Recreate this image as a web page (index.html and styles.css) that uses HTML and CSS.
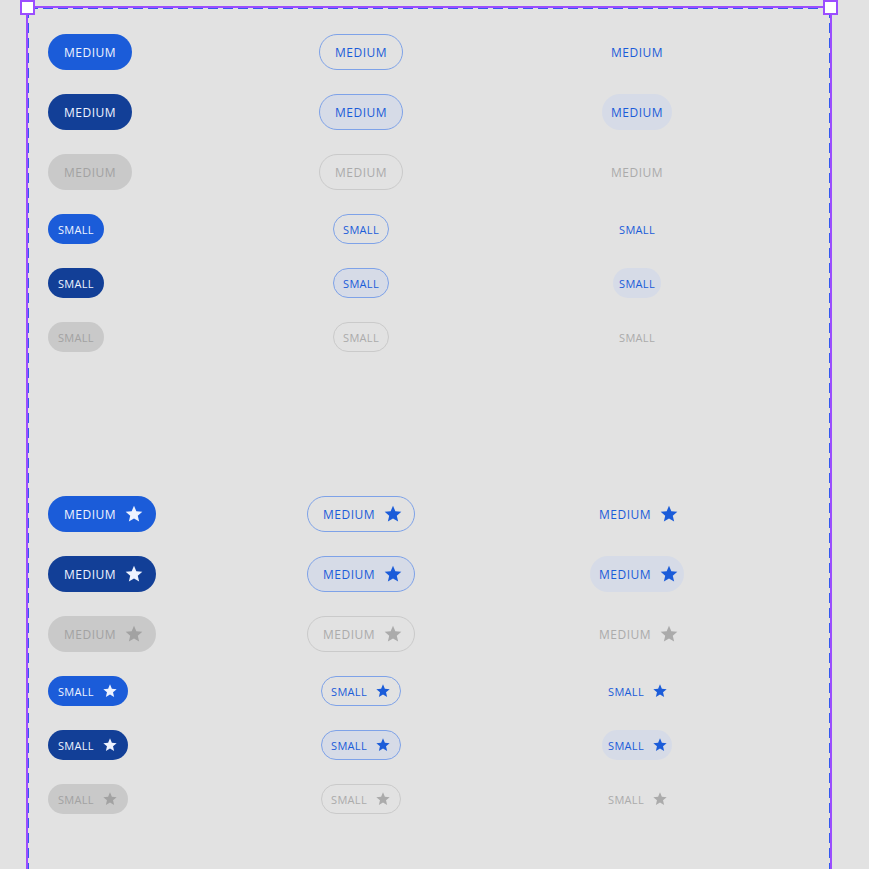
FILE: index.html
```html
<!DOCTYPE html>
<html lang="en">
<head>
  <meta charset="UTF-8">
  <meta name="viewport" content="width=device-width, initial-scale=1.0">
  <title>Buttons</title>
  <link rel="stylesheet" href="styles.css">
</head>
<body>
  <div class="canvas">
    <!-- selection frame drawn over the story -->
    <div class="frame">
      <span class="dash dash-top"></span>
      <span class="dash dash-left"></span>
      <span class="dash dash-right"></span>
      <span class="handle handle-left"></span>
      <span class="handle handle-right"></span>
    </div>

    <section class="button-grid">
      <button class="btn medium filled">Medium</button>
      <button class="btn medium outline">Medium</button>
      <button class="btn medium text">Medium</button>

      <button class="btn medium filled pressed">Medium</button>
      <button class="btn medium outline pressed">Medium</button>
      <button class="btn medium text pressed">Medium</button>

      <button class="btn medium filled disabled">Medium</button>
      <button class="btn medium outline disabled">Medium</button>
      <button class="btn medium text disabled">Medium</button>

      <button class="btn small filled">Small</button>
      <button class="btn small outline">Small</button>
      <button class="btn small text">Small</button>

      <button class="btn small filled pressed">Small</button>
      <button class="btn small outline pressed">Small</button>
      <button class="btn small text pressed">Small</button>

      <button class="btn small filled disabled">Small</button>
      <button class="btn small outline disabled">Small</button>
      <button class="btn small text disabled">Small</button>
    </section>

    <section class="button-grid icons">
      <button class="btn medium filled">Medium <svg class="star" viewBox="0 0 24 24"><path d="M12 17.27L18.18 21l-1.64-7.03L22 9.24l-7.19-.61L12 2 9.19 8.63 2 9.24l5.46 4.73L5.82 21z"/></svg></button>
      <button class="btn medium outline">Medium <svg class="star" viewBox="0 0 24 24"><path d="M12 17.27L18.18 21l-1.64-7.03L22 9.24l-7.19-.61L12 2 9.19 8.63 2 9.24l5.46 4.73L5.82 21z"/></svg></button>
      <button class="btn medium text">Medium <svg class="star" viewBox="0 0 24 24"><path d="M12 17.27L18.18 21l-1.64-7.03L22 9.24l-7.19-.61L12 2 9.19 8.63 2 9.24l5.46 4.73L5.82 21z"/></svg></button>

      <button class="btn medium filled pressed">Medium <svg class="star" viewBox="0 0 24 24"><path d="M12 17.27L18.18 21l-1.64-7.03L22 9.24l-7.19-.61L12 2 9.19 8.63 2 9.24l5.46 4.73L5.82 21z"/></svg></button>
      <button class="btn medium outline pressed">Medium <svg class="star" viewBox="0 0 24 24"><path d="M12 17.27L18.18 21l-1.64-7.03L22 9.24l-7.19-.61L12 2 9.19 8.63 2 9.24l5.46 4.73L5.82 21z"/></svg></button>
      <button class="btn medium text pressed">Medium <svg class="star" viewBox="0 0 24 24"><path d="M12 17.27L18.18 21l-1.64-7.03L22 9.24l-7.19-.61L12 2 9.19 8.63 2 9.24l5.46 4.73L5.82 21z"/></svg></button>

      <button class="btn medium filled disabled">Medium <svg class="star" viewBox="0 0 24 24"><path d="M12 17.27L18.18 21l-1.64-7.03L22 9.24l-7.19-.61L12 2 9.19 8.63 2 9.24l5.46 4.73L5.82 21z"/></svg></button>
      <button class="btn medium outline disabled">Medium <svg class="star" viewBox="0 0 24 24"><path d="M12 17.27L18.18 21l-1.64-7.03L22 9.24l-7.19-.61L12 2 9.19 8.63 2 9.24l5.46 4.73L5.82 21z"/></svg></button>
      <button class="btn medium text disabled">Medium <svg class="star" viewBox="0 0 24 24"><path d="M12 17.27L18.18 21l-1.64-7.03L22 9.24l-7.19-.61L12 2 9.19 8.63 2 9.24l5.46 4.73L5.82 21z"/></svg></button>

      <button class="btn small filled">Small <svg class="star" viewBox="0 0 24 24"><path d="M12 17.27L18.18 21l-1.64-7.03L22 9.24l-7.19-.61L12 2 9.19 8.63 2 9.24l5.46 4.73L5.82 21z"/></svg></button>
      <button class="btn small outline">Small <svg class="star" viewBox="0 0 24 24"><path d="M12 17.27L18.18 21l-1.64-7.03L22 9.24l-7.19-.61L12 2 9.19 8.63 2 9.24l5.46 4.73L5.82 21z"/></svg></button>
      <button class="btn small text">Small <svg class="star" viewBox="0 0 24 24"><path d="M12 17.27L18.18 21l-1.64-7.03L22 9.24l-7.19-.61L12 2 9.19 8.63 2 9.24l5.46 4.73L5.82 21z"/></svg></button>

      <button class="btn small filled pressed">Small <svg class="star" viewBox="0 0 24 24"><path d="M12 17.27L18.18 21l-1.64-7.03L22 9.24l-7.19-.61L12 2 9.19 8.63 2 9.24l5.46 4.73L5.82 21z"/></svg></button>
      <button class="btn small outline pressed">Small <svg class="star" viewBox="0 0 24 24"><path d="M12 17.27L18.18 21l-1.64-7.03L22 9.24l-7.19-.61L12 2 9.19 8.63 2 9.24l5.46 4.73L5.82 21z"/></svg></button>
      <button class="btn small text pressed">Small <svg class="star" viewBox="0 0 24 24"><path d="M12 17.27L18.18 21l-1.64-7.03L22 9.24l-7.19-.61L12 2 9.19 8.63 2 9.24l5.46 4.73L5.82 21z"/></svg></button>

      <button class="btn small filled disabled">Small <svg class="star" viewBox="0 0 24 24"><path d="M12 17.27L18.18 21l-1.64-7.03L22 9.24l-7.19-.61L12 2 9.19 8.63 2 9.24l5.46 4.73L5.82 21z"/></svg></button>
      <button class="btn small outline disabled">Small <svg class="star" viewBox="0 0 24 24"><path d="M12 17.27L18.18 21l-1.64-7.03L22 9.24l-7.19-.61L12 2 9.19 8.63 2 9.24l5.46 4.73L5.82 21z"/></svg></button>
      <button class="btn small text disabled">Small <svg class="star" viewBox="0 0 24 24"><path d="M12 17.27L18.18 21l-1.64-7.03L22 9.24l-7.19-.61L12 2 9.19 8.63 2 9.24l5.46 4.73L5.82 21z"/></svg></button>
    </section>
  </div>
</body>
</html>
```

FILE: styles.css
```css
/* Button story canvas */
body {
  margin: 0;
  background: #e2e2e2;
  font-family: 'Open Sans', 'Noto Sans', sans-serif;
  overflow: hidden;
}

.canvas {
  position: relative;
  min-height: 869px;
  padding: 34px 0 0 48px;
  box-sizing: border-box;
}

/* selection overlay */
.frame {
  position: absolute;
  left: 26px;
  top: 6px;
  width: 806px;
  height: 900px;
  border: 2px solid #9b4dff;
  border-bottom: none;
  box-sizing: border-box;
  pointer-events: none;
}

.dash {
  position: absolute;
}

.dash-top {
  top: 0;
  left: 0;
  right: 0;
  height: 1px;
  background: repeating-linear-gradient(to right, #3458f0 0 10px, transparent 10px 15px);
}

.dash-left,
.dash-right {
  top: 0;
  bottom: 0;
  width: 1px;
  background: repeating-linear-gradient(to bottom, #3458f0 0 10px, transparent 10px 15px);
}

.dash-left {
  left: 0;
}

.dash-right {
  right: 0;
}

.handle {
  position: absolute;
  top: -8px;
  width: 11px;
  height: 11px;
  background: #fff;
  border: 2px solid #9b4dff;
}

.handle-left {
  left: -8px;
}

.handle-right {
  right: -8px;
}

/* grid of variants */
.button-grid {
  display: grid;
  grid-template-columns: 175px 276px 276px;
  row-gap: 24px;
  align-items: center;
}

.button-grid .btn:nth-child(3n+1) {
  justify-self: start;
}

.button-grid .btn:nth-child(3n+2),
.button-grid .btn:nth-child(3n) {
  justify-self: center;
}

.icons {
  margin-top: 144px;
}

/* button base */
.btn {
  display: inline-flex;
  align-items: center;
  box-sizing: border-box;
  border: 1px solid transparent;
  border-radius: 999px;
  background: transparent;
  font-family: inherit;
  font-weight: 500;
  text-transform: uppercase;
  cursor: pointer;
  white-space: nowrap;
}

.btn .star {
  fill: currentColor;
  flex: none;
}

.medium {
  height: 36px;
  padding: 0 15px;
  font-size: 12px;
  letter-spacing: 0.5px;
}

.medium .star {
  width: 20px;
  height: 20px;
  margin-left: 8px;
  margin-right: -4px;
}

.small {
  height: 30px;
  padding: 0 9px;
  font-size: 11px;
  letter-spacing: 0.3px;
}

.small .star {
  width: 16px;
  height: 16px;
  margin-left: 8px;
}

/* filled */
.filled {
  background: #1b5cd9;
  color: #eef3ff;
}

.filled.pressed {
  background: #123f97;
}

.filled.disabled {
  background: #c9c9c9;
  color: #a2a2a2;
}

/* outline */
.outline {
  border-color: #7ea2e8;
  color: #1b5cd9;
}

.outline.pressed {
  background: #d6dbe7;
}

.outline.disabled {
  border-color: #cacaca;
  color: #ababab;
}

/* text */
.text {
  color: #1b5cd9;
}

.medium.text {
  padding: 0 8px;
}

.small.text {
  padding: 0 5px;
}

.small.text .star {
  margin-right: -2px;
}

.text.pressed {
  background: #d6dbe7;
}

.text.disabled {
  color: #ababab;
}
```
